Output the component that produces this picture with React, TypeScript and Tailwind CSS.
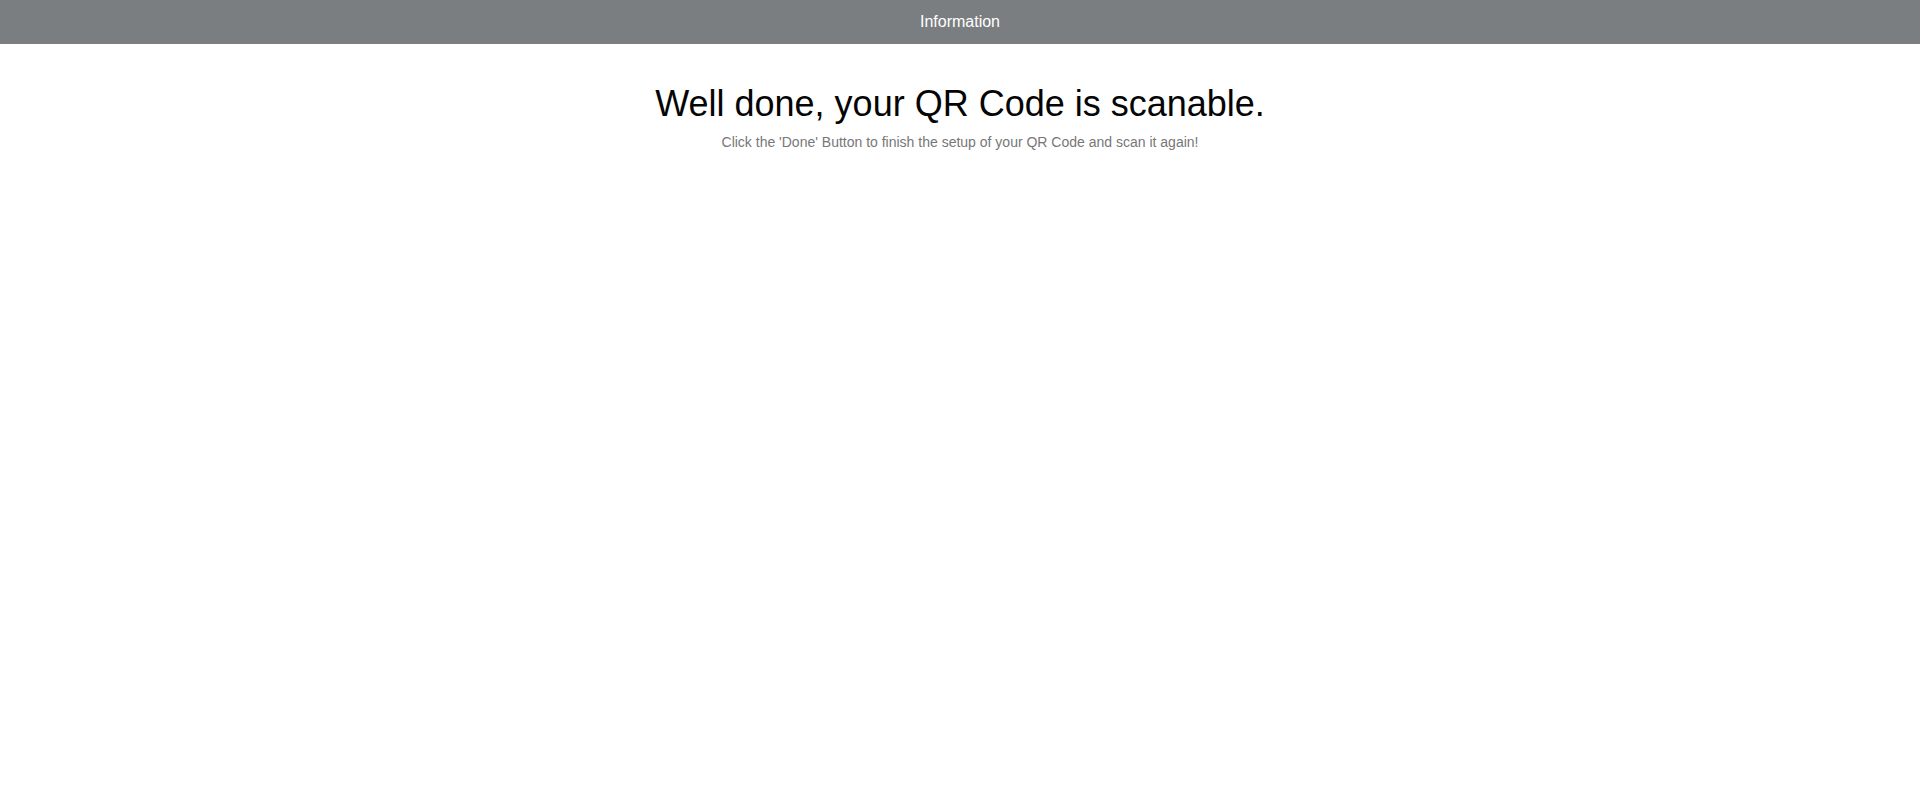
export default function App() {
  return (
    <div className="min-h-screen bg-white font-['Liberation_Sans',Arial,sans-serif]">
      <header className="h-[44px] bg-[#7b7e81] flex items-center justify-center">
        <span className="text-white text-base">Information</span>
      </header>
      <main className="flex flex-col items-center pt-[38px]">
        <h1 className="text-[36px] leading-[1.2] text-[#050505]">Well done, your QR Code is scanable.</h1>
        <p className="text-sm text-[#777] mt-[7px]">
          Click the 'Done' Button to finish the setup of your QR Code and scan it again!
        </p>
      </main>
    </div>
  );
}
